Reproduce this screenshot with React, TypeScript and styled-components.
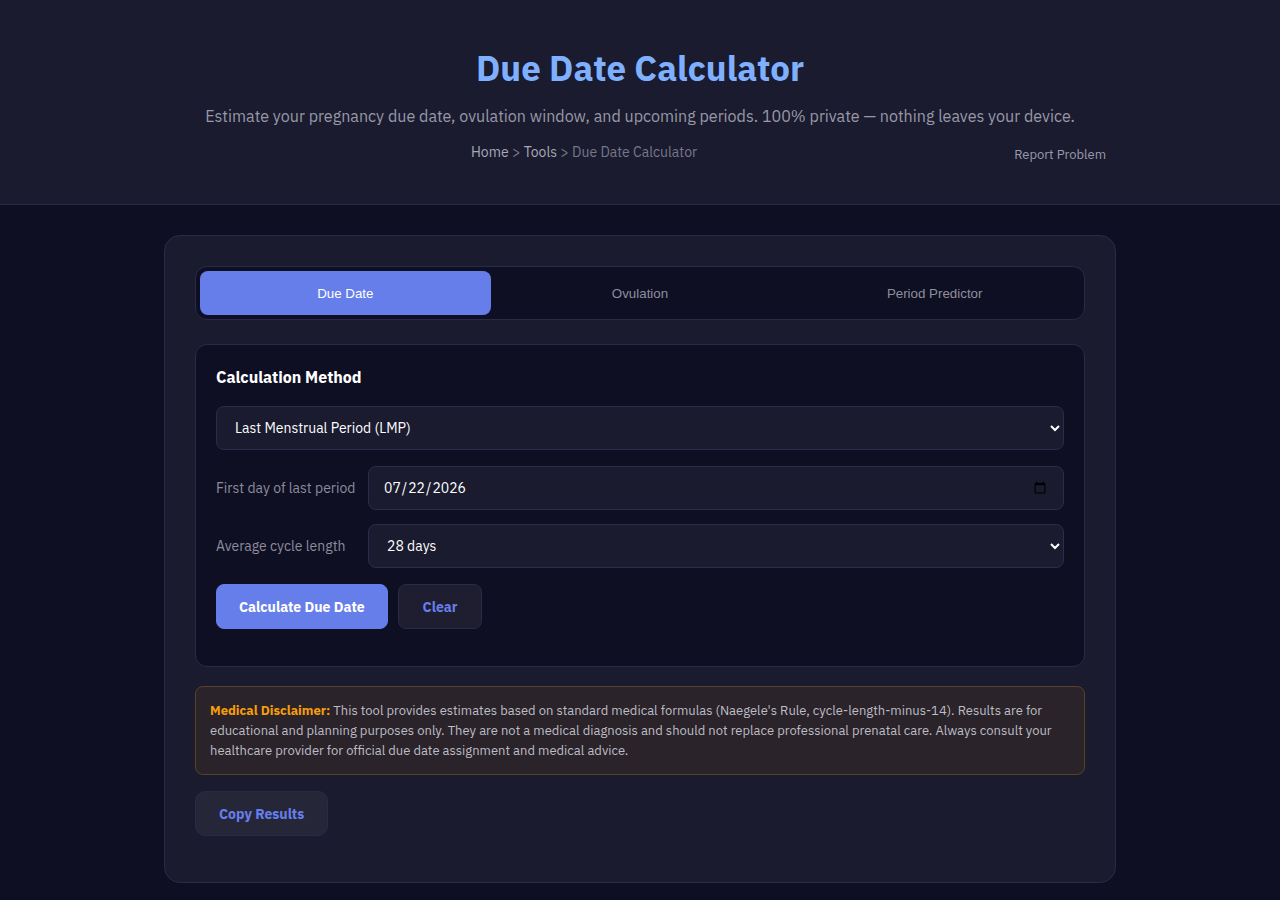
import React from "react";
import styled, { createGlobalStyle } from "styled-components";

const Global = createGlobalStyle`
  * { box-sizing: border-box; }
  html, body { margin: 0; padding: 0; }
  body {
    background: #0f0f23;
    font-family: "IBM Plex Sans", Inter, "Noto Sans", sans-serif;
    color: #e4e4ee;
  }
`;

const Header = styled.header`
  background: #1a1b2e;
  border-bottom: 1px solid #2a2b48;
  padding: 46px 0 39px;
  text-align: center;
`;

const HeaderInner = styled.div`
  width: 952px;
  margin: 0 auto;
`;

const Title = styled.h1`
  margin: 0;
  font-size: 35px;
  font-weight: 700;
  line-height: 44px;
  color: #7fb0ff;
`;

const Subtitle = styled.p`
  margin: 14px 0 0;
  font-size: 16.1px;
  line-height: 24px;
  color: #9898a8;
`;

const CrumbRow = styled.div`
  display: flex;
  align-items: flex-start;
  gap: 10px;
  margin-top: 14px;
  padding-right: 10px;
`;

const Crumbs = styled.nav`
  flex: 1;
  font-size: 14px;
  line-height: 20px;
  color: #77778a;
`;

const CrumbLink = styled.a`
  color: #a8a8b8;
  text-decoration: none;
`;

const Report = styled.a`
  margin-top: 3px;
  font-size: 13px;
  line-height: 20px;
  color: #9a9aaa;
  text-decoration: none;
  white-space: nowrap;
`;

const Main = styled.main`
  padding: 30px 0 17px;
`;

const Card = styled.section`
  width: 952px;
  margin: 0 auto;
  background: #1b1b2f;
  border: 1px solid #2a2a46;
  border-radius: 16px;
  padding: 30px 30px 46px;
  display: flex;
  flex-direction: column;
`;

const Tabs = styled.div`
  display: grid;
  grid-template-columns: repeat(3, 1fr);
  gap: 4px;
  padding: 4px;
  background: #0f0f23;
  border: 1px solid #2a2a48;
  border-radius: 12px;
`;

const Tab = styled.button<{ $active?: boolean }>`
  height: 44px;
  border: none;
  border-radius: 8px;
  font-family: "Liberation Sans", Arial, sans-serif;
  font-size: 13.33px;
  background: ${(p) => (p.$active ? "#667eea" : "transparent")};
  color: ${(p) => (p.$active ? "#ffffff" : "#8e8e9e")};
  cursor: pointer;
`;

const Panel = styled.div`
  margin-top: 24px;
  background: #0f0f23;
  border: 1px solid #2a2a48;
  border-radius: 12px;
  padding: 20px 20px 37px;
`;

const PanelTitle = styled.h3`
  margin: 0 0 17px;
  font-size: 16px;
  line-height: 24px;
  font-weight: 700;
  color: #ffffff;
`;

const fieldStyles = `
  width: 100%;
  height: 44px;
  background: #1b1b2f;
  border: 1px solid #2c2c4c;
  border-radius: 8px;
  color: #ffffff;
  font-family: "IBM Plex Sans", Inter, "Noto Sans", sans-serif;
  font-size: 14px;
  padding: 0 14px;
`;

const Select = styled.select`
  ${fieldStyles}
`;

const DateInput = styled.input`
  ${fieldStyles}
`;

const Row = styled.div<{ $gap: number }>`
  display: flex;
  align-items: center;
  gap: 12px;
  margin-top: ${(p) => p.$gap}px;
`;

const Label = styled.label`
  flex: 0 0 140px;
  font-size: 14px;
  color: #8c8c9c;
  white-space: nowrap;
`;

const Actions = styled.div`
  display: flex;
  gap: 10px;
  margin-top: 16px;
`;

const Button = styled.button<{ $primary?: boolean }>`
  height: 45px;
  padding: 0 ${(p) => (p.$primary ? 22 : 24)}px;
  border-radius: 8px;
  font-family: "IBM Plex Sans", Inter, "Noto Sans", sans-serif;
  font-size: 14px;
  font-weight: 700;
  cursor: pointer;
  border: 1px solid ${(p) => (p.$primary ? "#667eea" : "#2a2a46")};
  background: ${(p) => (p.$primary ? "#667eea" : "#1e1e30")};
  color: ${(p) => (p.$primary ? "#ffffff" : "#667eea")};
`;

const Disclaimer = styled.div`
  margin-top: 19px;
  background: #2a2329;
  border: 1px solid #5a4222;
  border-radius: 8px;
  padding: 14px 14px 13px;
  font-size: 13px;
  line-height: 20px;
  color: #bdbdc6;
`;

const Strong = styled.strong`
  color: #f59e0b;
`;

const CopyRow = styled.div`
  margin-top: 16px;
  display: flex;
`;

const CopyButton = styled.button`
  height: 45px;
  padding: 0 23px;
  border-radius: 10px;
  border: 1px solid #2a2a46;
  background: #262639;
  color: #667eea;
  font-family: "IBM Plex Sans", Inter, "Noto Sans", sans-serif;
  font-size: 14px;
  font-weight: 700;
  cursor: pointer;
`;

export default function App() {
  const days = Array.from({ length: 15 }, (_, i) => 21 + i);
  return (
    <>
      <Global />
      <Header>
        <HeaderInner>
          <Title>Due Date Calculator</Title>
          <Subtitle>
            Estimate your pregnancy due date, ovulation window, and upcoming periods. 100% private — nothing leaves your device.
          </Subtitle>
          <CrumbRow>
            <Crumbs>
              <CrumbLink href="#">Home</CrumbLink> &gt; <CrumbLink href="#">Tools</CrumbLink> &gt; Due Date Calculator
            </Crumbs>
            <Report href="#">Report Problem</Report>
          </CrumbRow>
        </HeaderInner>
      </Header>
      <Main>
        <Card>
          <Tabs>
            <Tab $active>Due Date</Tab>
            <Tab>Ovulation</Tab>
            <Tab>Period Predictor</Tab>
          </Tabs>
          <Panel>
            <PanelTitle>Calculation Method</PanelTitle>
            <Select defaultValue="lmp">
              <option value="lmp">Last Menstrual Period (LMP)</option>
              <option value="conception">Conception Date</option>
              <option value="ivf">IVF Transfer Date</option>
            </Select>
            <Row $gap={16}>
              <Label>First day of last period</Label>
              <DateInput type="date" defaultValue="2026-07-22" />
            </Row>
            <Row $gap={14}>
              <Label>Average cycle length</Label>
              <Select defaultValue="28">
                {days.map((d) => (
                  <option key={d} value={String(d)}>
                    {d} days
                  </option>
                ))}
              </Select>
            </Row>
            <Actions>
              <Button $primary>Calculate Due Date</Button>
              <Button>Clear</Button>
            </Actions>
          </Panel>
          <Disclaimer>
            <Strong>Medical Disclaimer:</Strong> This tool provides estimates based on standard medical formulas (Naegele's Rule, cycle-length-minus-14). Results are for educational and planning purposes only. They are not a medical diagnosis and should not replace professional prenatal care. Always consult your healthcare provider for official due date assignment and medical advice.
          </Disclaimer>
          <CopyRow>
            <CopyButton>Copy Results</CopyButton>
          </CopyRow>
        </Card>
      </Main>
    </>
  );
}
